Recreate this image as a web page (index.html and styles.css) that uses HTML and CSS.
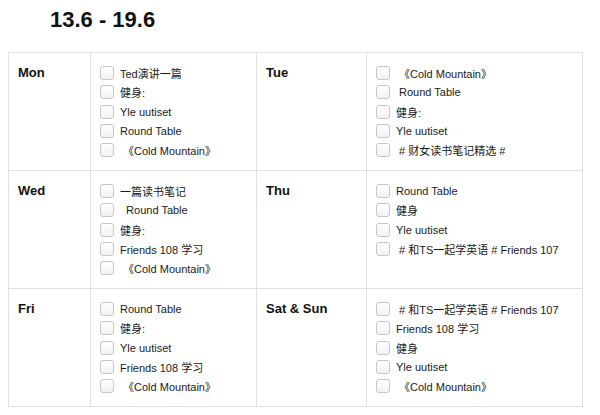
FILE: index.html
```html
<!DOCTYPE html>
<html>
<head>
<meta charset="utf-8">
<link rel="stylesheet" href="styles.css">
</head>
<body>
<h1 class="title">13.6 - 19.6</h1>
<div class="week">
  <div class="day">Mon</div>
  <div class="tasks">
    <div class="task"><span class="box"></span><span class="label">Ted演讲一篇</span></div>
    <div class="task"><span class="box"></span><span class="label">健身:</span></div>
    <div class="task"><span class="box"></span><span class="label">Yle uutiset</span></div>
    <div class="task"><span class="box"></span><span class="label">Round Table</span></div>
    <div class="task"><span class="box"></span><span class="label"> 《Cold Mountain》</span></div>
  </div>
  <div class="day">Tue</div>
  <div class="tasks">
    <div class="task"><span class="box"></span><span class="label"> 《Cold Mountain》</span></div>
    <div class="task"><span class="box"></span><span class="label"> Round Table</span></div>
    <div class="task"><span class="box"></span><span class="label">健身:</span></div>
    <div class="task"><span class="box"></span><span class="label">Yle uutiset</span></div>
    <div class="task"><span class="box"></span><span class="label"> # 财女读书笔记精选 #</span></div>
  </div>

  <div class="day">Wed</div>
  <div class="tasks">
    <div class="task"><span class="box"></span><span class="label">一篇读书笔记</span></div>
    <div class="task"><span class="box"></span><span class="label">  Round Table</span></div>
    <div class="task"><span class="box"></span><span class="label">健身:</span></div>
    <div class="task"><span class="box"></span><span class="label">Friends 108 学习</span></div>
    <div class="task"><span class="box"></span><span class="label"> 《Cold Mountain》</span></div>
  </div>
  <div class="day">Thu</div>
  <div class="tasks">
    <div class="task"><span class="box"></span><span class="label">Round Table</span></div>
    <div class="task"><span class="box"></span><span class="label">健身</span></div>
    <div class="task"><span class="box"></span><span class="label">Yle uutiset</span></div>
    <div class="task"><span class="box"></span><span class="label"> # 和TS一起学英语 # Friends 107</span></div>
  </div>

  <div class="day">Fri</div>
  <div class="tasks">
    <div class="task"><span class="box"></span><span class="label">Round Table</span></div>
    <div class="task"><span class="box"></span><span class="label">健身:</span></div>
    <div class="task"><span class="box"></span><span class="label">Yle uutiset</span></div>
    <div class="task"><span class="box"></span><span class="label">Friends 108 学习</span></div>
    <div class="task"><span class="box"></span><span class="label"> 《Cold Mountain》</span></div>
  </div>
  <div class="day">Sat &amp; Sun</div>
  <div class="tasks">
    <div class="task"><span class="box"></span><span class="label"> # 和TS一起学英语 # Friends 107</span></div>
    <div class="task"><span class="box"></span><span class="label">Friends 108 学习</span></div>
    <div class="task"><span class="box"></span><span class="label">健身</span></div>
    <div class="task"><span class="box"></span><span class="label">Yle uutiset</span></div>
    <div class="task"><span class="box"></span><span class="label"> 《Cold Mountain》</span></div>
  </div>
</div>
</body>
</html>
```
FILE: styles.css
```css
body {
  margin: 8px;
  background: #fff;
  color: #111;
  font-family: "Liberation Sans", "Noto Sans CJK SC", sans-serif;
}
.title {
  margin: 0 0 20px 0;
  padding-left: 42px;
  font-size: 22px;
  line-height: 24px;
  font-weight: bold;
}
.week {
  display: grid;
  grid-template-columns: 82px 166px 110px 216px;
  grid-auto-rows: 118px;
  width: 575px;
  box-sizing: border-box;
  border-top: 1px solid #e0e0e0;
  border-left: 1px solid #e0e0e0;
}
.day, .tasks {
  border-right: 1px solid #e0e0e0;
  border-bottom: 1px solid #e0e0e0;
  padding: 10px 9px;
}
.day {
  font-size: 13px;
  font-weight: bold;
  line-height: 20px;
}
.tasks {
  display: flex;
  flex-direction: column;
}
.task {
  display: flex;
  align-items: center;
  height: 19.5px;
  font-size: 11px;
}
.box {
  flex: none;
  width: 14px;
  height: 14px;
  box-sizing: border-box;
  border: 1px solid #c6c6c6;
  border-radius: 3px;
  background: linear-gradient(#ffffff, #f2f2f2);
  margin-right: 6px;
}
.label {
  white-space: pre;
  color: #1a1a1a;
}
```
